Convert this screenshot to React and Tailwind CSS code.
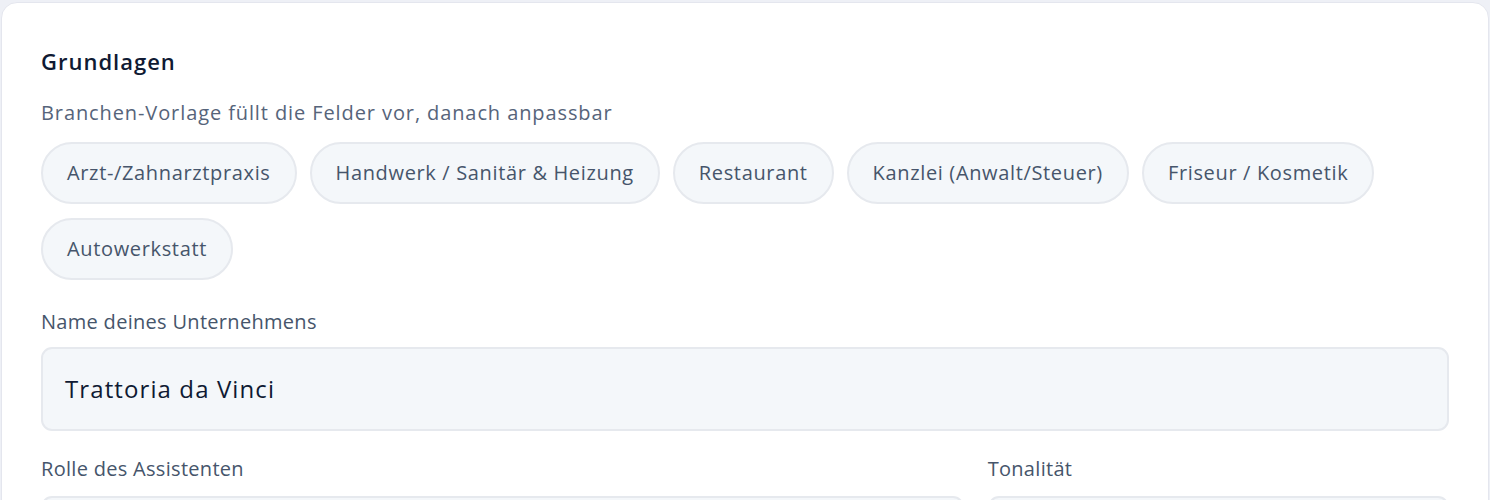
import React from "react";

const chips = [
  "Arzt-/Zahnarztpraxis",
  "Handwerk / Sanitär & Heizung",
  "Restaurant",
  "Kanzlei (Anwalt/Steuer)",
  "Friseur / Kosmetik",
  "Autowerkstatt",
];

export default function App() {
  return (
    <div
      className="min-h-[500px] bg-[#eef0f6] pt-[2px] px-[1px]"
      style={{ fontFamily: "'Open Sans', 'Noto Sans', sans-serif" }}
    >
      <div className="rounded-[16px] border border-[#e4e6ee] bg-white px-[39px] pt-[44px] pb-10">
        <h2 className="text-[22px] leading-[28px] font-semibold tracking-[1px] text-[#0f1a33]">Grundlagen</h2>
        <p className="mt-[25px] text-[20px] leading-[26px] tracking-[0.9px] text-[#56647a]">
          Branchen-Vorlage füllt die Felder vor, danach anpassbar
        </p>
        <div className="mt-[16px] flex flex-wrap gap-x-[13px] gap-y-[14px]">
          {chips.map((c) => (
            <button
              key={c}
              className="h-[62px] rounded-full border-2 border-[#e6e9ee] bg-[#f4f7fa] px-[24px] text-[20px] tracking-[0.65px] text-[#46556b]"
            >
              {c}
            </button>
          ))}
        </div>
        <label className="mt-[29px] block text-[20px] leading-[26px] tracking-[0.3px] text-[#46556b]">
          Name deines Unternehmens
        </label>
        <div className="mt-[12px] flex h-[84px] items-center rounded-[11px] border-2 border-[#e6e9ee] bg-[#f4f7fa] px-[22px] text-[24px] tracking-[1.1px] text-[#0f1a33]">
          Trattoria da Vinci
        </div>
        <div className="mt-[25px] grid grid-cols-[2fr_1fr] gap-6">
          <div>
            <label className="block text-[20px] leading-[26px] tracking-[0.3px] text-[#46556b]">Rolle des Assistenten</label>
            <div className="mt-[14px] h-[84px] rounded-[11px] border-2 border-[#e6e9ee] bg-[#f4f7fa]" />
          </div>
          <div>
            <label className="block text-[20px] leading-[26px] tracking-[0.3px] text-[#46556b]">Tonalität</label>
            <div className="mt-[14px] h-[84px] rounded-[11px] border-2 border-[#e6e9ee] bg-[#f4f7fa]" />
          </div>
        </div>
      </div>
    </div>
  );
}
